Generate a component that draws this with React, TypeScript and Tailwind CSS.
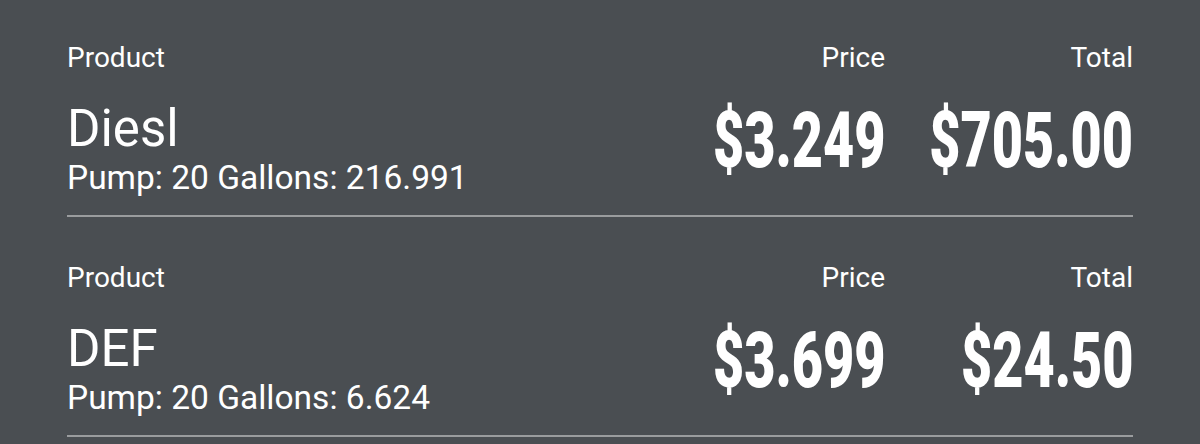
const rows = [
  { product: 'Diesl', pump: 20, gallons: '216.991', price: '$3.249', total: '$705.00' },
  { product: 'DEF', pump: 20, gallons: '6.624', price: '$3.699', total: '$24.50' },
];

function BigNumber({ value }: { value: string }) {
  return (
    <div className="h-[77px] mt-[30px] flex justify-end items-center">
      <span className="inline-block origin-right scale-x-[0.7] text-[77px] leading-none font-black text-white">
        {value}
      </span>
    </div>
  );
}

export default function App() {
  return (
    <div className="min-h-screen bg-[#4a4e52] px-[67px] pt-[43px] flex flex-col gap-[46px] font-['Roboto',sans-serif]">
      {rows.map((row, idx) => (
        <div key={idx} className="flex border-b-2 border-[#9a9c9e] h-[174px]">
          <div className="flex-1 text-white">
            <div className="text-[28px] leading-[30px]">Product</div>
            <div className="text-[51px] leading-[56px] mt-[28px]">{row.product}</div>
            <div className="text-[33.5px] leading-[36px] mt-[3px]">
              Pump: {row.pump} Gallons: {row.gallons}
            </div>
          </div>
          <div className="w-[220px] text-right text-white">
            <div className="text-[28px] leading-[30px]">Price</div>
            <BigNumber value={row.price} />
          </div>
          <div className="w-[248px] text-right text-white">
            <div className="text-[28px] leading-[30px]">Total</div>
            <BigNumber value={row.total} />
          </div>
        </div>
      ))}
    </div>
  );
}
